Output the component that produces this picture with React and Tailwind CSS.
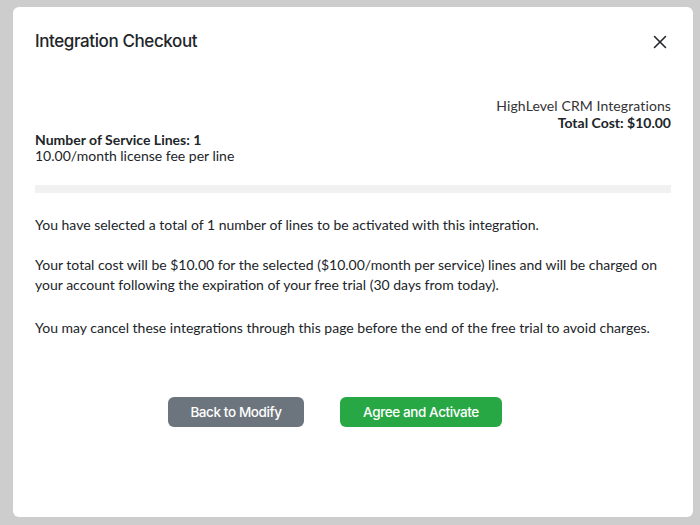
import { X } from 'lucide-react';

export default function App() {
  return (
    <div className="w-[700px] h-[525px] overflow-hidden bg-[#cdcdcd] pt-[7px] pl-[13px]">
      <div className="w-[680px] h-[510px] bg-white rounded-[6px] px-[22px] font-['Lato',sans-serif] text-[14px] text-[#212529]">
        <div className="flex items-center justify-between h-[72px] pb-[2px]">
          <h2 className="font-['Inter',sans-serif] font-medium text-[17px] tracking-[-0.4px] text-[#212529]">
            Integration Checkout
          </h2>
          <X size={22} strokeWidth={1.7} className="text-[#212529]" />
        </div>

        <div className="pt-[19px] leading-[16.8px]">
          <div className="text-right text-[#333] tracking-[0.1px]">HighLevel CRM Integrations</div>
          <div className="text-right font-bold">Total Cost: $10.00</div>
          <div className="font-bold">Number of Service Lines: 1</div>
          <div>10.00/month license fee per line</div>
        </div>

        <div className="mt-[20px] h-[8px] bg-[#f1f1f1]" />

        <div className="mt-[22px] leading-[20px]">
          <p className="mb-[20px]">You have selected a total of 1 number of lines to be activated with this integration.</p>
          <p className="mb-[23px]">
            Your total cost will be $10.00 for the selected ($10.00/month per service) lines and will be charged on your account following the expiration of your free trial (30 days from today).
          </p>
          <p>You may cancel these integrations through this page before the end of the free trial to avoid charges.</p>
        </div>

        <div className="flex gap-[36px] ml-[133px] mt-[59px] font-['Inter',sans-serif] font-medium text-[13.5px] tracking-[-0.4px] text-white">
          <button className="w-[136px] h-[30px] rounded-[6px] bg-[#6c757d]">Back to Modify</button>
          <button className="w-[162px] h-[30px] rounded-[6px] bg-[#28a745]">Agree and Activate</button>
        </div>
      </div>
    </div>
  );
}
